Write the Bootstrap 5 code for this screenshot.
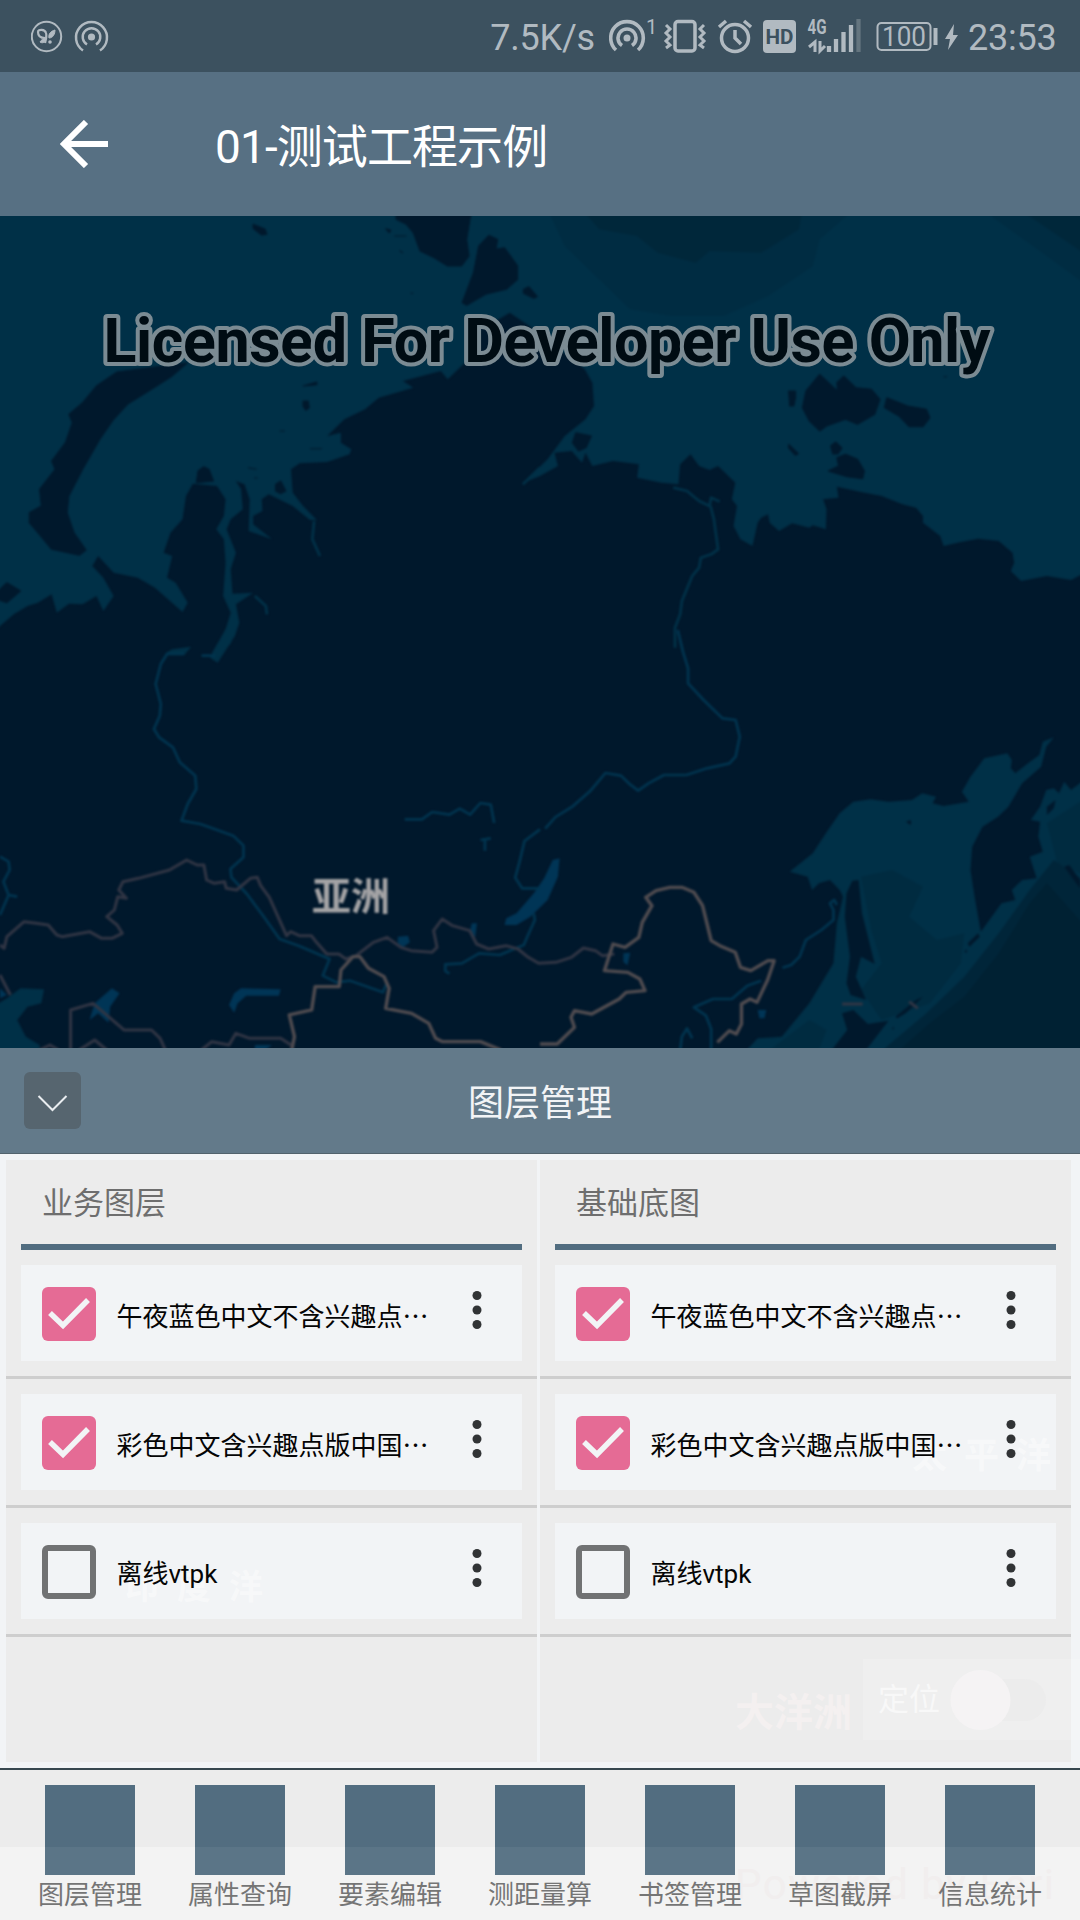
<!DOCTYPE html>
<html lang="zh-CN">
<head>
<meta charset="utf-8">
<meta name="viewport" content="width=device-width, initial-scale=1">
<title>01-测试工程示例</title>
<link href="https://cdn.jsdelivr.net/npm/bootstrap@5.3.0/dist/css/bootstrap.min.css" rel="stylesheet">
<style>
  body { width: 1080px; height: 1920px; overflow: hidden; font-family: Roboto, "Noto Sans CJK SC", sans-serif; line-height: 1; background: #ececec; }
  svg { display: block; flex: none; }
  .status-bar { height: 72px; background: #3c515f; color: #b1bac1; font-size: 36px; padding: 0 24px 0 31px; }
  .status-bar svg text { fill: #b1bac1; }
  .status-text { padding-top: 3px; letter-spacing: -.2px; }
  .clock { width: 88px; }
  .app-bar { height: 144px; background: #577083; padding-left: 60px; }
  .app-title { font-size: 46px; letter-spacing: -.9px; margin: 7px 0 0 107px; }
  .map-view { height: 832px; background: #00182c; overflow: hidden; }
  .terrain { filter: blur(.8px); }
  .panel-head { height: 106px; background: #637a8a; border-bottom: 1px solid #52636d; }
  .panel-name { font-size: 36px; color: #f2f4f6; padding-top: 7px; }
  .fold-btn { left: 24px; top: 24px; width: 57px; height: 57px; border-radius: 6px; background: #56656f; border: 0; padding: 0; }
  .panel-body { height: 614px; background: #f2f4f6; padding: 6px 9px 6px 6px; gap: 3px; }
  .layer-col { flex: 1 1 0; min-width: 0; background: #ececec; }
  .layer-head { height: 90px; margin: 0 15px; padding: 3px 21px 0; border-bottom: 6px solid #526d80; color: #6e6e6e; font-size: 31px; }
  .layer-item { padding: 15px; border-bottom: 3px solid #cecece; }
  .layer-box { height: 96px; background: #f2f4f6; padding: 2px 37px 0 21px; }
  .layer-label { width: 314px; margin-left: 20.5px; font-size: 26px; line-height: 40px; color: #050505; padding-top: 4px; white-space: nowrap; z-index: 2; }
  .dots { font-family: "Noto Sans CJK SC", sans-serif; }
  .more { z-index: 2; margin-top: -8px; }
  .ghost { z-index: 1; color: rgba(255,255,255,.42); font-weight: 700; white-space: nowrap; pointer-events: none; }
  .ghost-pacific { left: 912px; top: 285px; font-size: 35px; letter-spacing: 17px; }
  .ghost-indian { left: 125px; top: 416px; font-size: 34px; letter-spacing: 18px; }
  .ghost-oceania { left: 735px; top: 540px; font-size: 39px; color: #f4f0f0; }
  .locate { left: 863px; top: 505px; width: 217px; height: 81px; background: rgba(255,255,255,.2); font-weight: 400; font-size: 31px; padding-left: 15px; color: #f8f8f8; }
  .tool-bar { height: 152px; border-top: 2px solid #37474f; padding: 15px 15px 0; background: linear-gradient(#ececec 77px, #f3f3f3 77px); }
  .tool { width: 150px; color: #757575; font-size: 26px; }
  .tool-icon { width: 90px; height: 90px; background: linear-gradient(#526d80 62px, #5b7587 62px); }
  .tool-name { margin-top: 7px; z-index: 2; }
  .powered { left: 735px; top: 94px; font-size: 42px; font-weight: 400; color: #f1eeee; letter-spacing: 1.5px; z-index: 0; }
</style>
</head>
<body class="d-flex flex-column">

<header class="status-bar d-flex align-items-center flex-shrink-0">
  <svg width="80" height="72" viewBox="31 0 80 72" fill="none" stroke="#b1bac1" stroke-width="2">
    <circle cx="46.5" cy="36.5" r="14.7"/>
    <path d="M45 38c-6 0-7-3-7-6s7-3 8 1c1 3 0 6-1 10" stroke-width="2.2"/>
    <path d="M55 30c-4 1-7 4-6 8 4 0 6-4 6-8zM46 37c-3 2-5 3-6 5 3 2 6 0 6-5z" fill="#b1bac1" stroke-width="1"/>
    <circle cx="50" cy="42" r="1.8" fill="#b1bac1" stroke="none"/>
    <circle cx="91.5" cy="37" r="3.6" fill="#b1bac1" stroke="none"/>
    <path d="M83 50.500A15.500 15.500 0 1 1 100 50.500M87 44.500a8.800 8.800 0 1 1 9 0" stroke-width="2.500"/>
  </svg>
  <span class="status-text ms-auto">7.5K/s</span>
  <svg width="360" height="72" viewBox="609 0 360 72" fill="none" stroke="#b1bac1" style="margin-left:14px">
    <circle cx="627" cy="38" r="3.500" fill="#b1bac1" stroke="none"/>
    <path d="M616 50A16.300 16.300 0 1 1 638 50M622 45.500a9 9 0 1 1 10 0" stroke-width="3.600"/>
    <text x="646" y="34" font-size="20" stroke="none">1</text>
    <rect x="675" y="21.500" width="20" height="29.500" rx="3" stroke-width="3.500"/>
    <path d="M666 25l4 4-4 4 4 4-4 4 4 4-4 3M704 25l-4 4 4 4-4 4 4 4-4 4 4 3" stroke-width="3"/>
    <circle cx="735" cy="38" r="13.500" stroke-width="3.500"/>
    <path d="M735 30v8l6 6M719 27l7-6M751 27l-7-6" stroke-width="3.500"/>
    <rect x="763" y="20" width="33" height="33" rx="4" fill="#b1bac1" stroke="none"/>
    <text x="765.500" y="44" font-size="20" font-weight="700" stroke="none" textLength="28" lengthAdjust="spacingAndGlyphs" style="fill:#3c515f">HD</text>
    <text x="807.500" y="33.500" font-size="20" font-weight="700" stroke="none" textLength="19" lengthAdjust="spacingAndGlyphs">4G</text>
    <path d="M815 52V42l-6 5M820 41v10l5-5" stroke-width="3"/>
    <path d="M829 46v6M836 39v13M843.500 32v20M851 25v27" stroke-width="4.300"/>
    <path d="M858.500 19v33" stroke-width="4.300" stroke="#64757f"/>
    <rect x="877.500" y="23" width="53" height="27" rx="4" stroke-width="2"/>
    <text x="882" y="46" font-size="27" stroke="none" textLength="44" lengthAdjust="spacingAndGlyphs">100</text>
    <path d="M935.500 28v17" stroke-width="4"/>
    <path d="M954 24l-9 15h5l-2 11 10-15h-5z" fill="#b1bac1" stroke="none"/>
  </svg>
  <span class="status-text clock" style="margin-left:-1px">23:53</span>
</header>

<nav class="app-bar d-flex align-items-center flex-shrink-0 text-white">
  <svg width="48" height="48" viewBox="0 0 48 48" fill="none" stroke="#fff" stroke-width="6"><path d="M26 2L4 24l22 22M3 24h45"/></svg>
  <h1 class="app-title fw-normal">01-测试工程示例</h1>
</nav>

<section class="map-view flex-shrink-0">
  <svg width="1080" height="832" viewBox="0 0 1080 832">
    <g class="terrain">
    <!-- northern seas and islands -->
    <g transform="scale(.34439 .33333)">
      <path fill="#003047" d="M-20 1250L0 1230 40 1195 80 1170 110 1160 150 1135 165 1190 200 1163 240 1165 280 1140 300 1185 330 1140 300 1085 268 1050 285 1020 330 1070 400 1085 450 1115 530 1188 545 1160 510 1100 485 1085 500 1020 475 1010 495 950 530 910 540 840 560 803 630 810 655 850 650 900 628 940 650 970 655 1040 648 1140 670 1190 655 1240 610 1325 632 1340 682 1260 695 1220 685 1165 735 1130 675 1133 670 1060 685 1010 658 940 670 910 705 880 700 820 685 795 710 805 725 850 722 945 790 970 735 925 735 900 762 885 760 850 780 835 850 870 900 912 920 912 880 870 850 830 845 760 870 742 950 738 1015 715 1020 700 990 680 990 650 950 660 1000 610 1060 580 1100 545 1200 515 1170 495 1280 465 1300 490 1350 440 1400 330 1440 315 1480 290 1530 325 1698 460 1720 500 1725 570 1700 610 1640 660 1590 730 1520 800 1568 780 1620 750 1610 710 1660 705 1690 740 1700 710 1720 750 1780 735 1855 745 1850 785 1920 800 1970 805 1975 745 2005 715 2030 750 2060 762 2085 750 2135 800 2125 850 2140 870 2130 930 2150 970 2185 990 2200 920 2210 905 2230 895 2235 920 2262 945 2300 922 2350 935 2360 928 2398 940 2400 880 2390 850 2435 845 2430 812 2500 828 2560 840 2620 865 2660 875 2680 900 2680 920 2730 960 2740 990 2790 978 2840 968 2900 975 2940 1010 2945 1040 2935 1065 2965 1095 3040 1080 3110 1092 3160 1065V-20H-20Z"/>
      <path fill="#002c42" d="M1590 -20L1640 90 1730 180 1830 280 1950 300 2100 300 2230 240 2360 150 2380 70 2480 -20ZM2850 -20L3000 90 3160 210V-20Z"/>
      <path fill="#00273a" d="M1690 -20L1740 40 1850 60 1910 110 2020 140 2060 105 2210 110 2320 40 2330 -20ZM2960 -20L3160 120V-20Z"/>
      <g fill="#00182c" stroke="#00182c" stroke-width="3" stroke-linejoin="round">
        <path d="M1150 -10L1150 10 1180 25 1200 50 1220 105 1260 125 1300 150 1340 150 1362 120 1355 70 1368 -10ZM1390 90L1420 58 1445 70 1440 100 1465 95 1503 150 1503 190 1470 220 1410 235 1355 268 1342 260 1375 170Z"/>
        <path d="M735 25l35 15 5 15-15 2-25-20zM1120 38l15 5-5 7zM1145 60h35M1160 103l10 8M1520 220l15-8 25 30-10 5-30-15zM880 555h15l3 20-10 8-8-12zM880 510l40-12v8zM812 645h15M900 698h35M720 755l25 5M738 786h10M1192 232h8"/>
        <path d="M545 440L340 468 280 510 240 560 200 595 210 620 190 680 150 735 160 760 115 820 120 870 85 890 85 920 110 950 150 1000 230 1018 250 1002 215 950 195 890 200 840 240 760 290 670 330 610 370 565 440 520 500 480Z"/>
        <path d="M570 800L575 765 592 752 607 760 620 795ZM800 825l0-20 15-10 15 30-15 8zM-10 1130L20 1100 60 1125 20 1160 -10 1150Z"/>
        <path d="M2290 525h20v20l-5 25h-12zM2330 575L2340 525 2380 475 2432 525 2430 500 2450 480 2485 515 2530 520 2555 550 2540 595 2490 625 2455 610 2400 630 2380 645 2350 615ZM2568 575L2575 545 2635 570 2690 580 2700 605 2680 632 2640 632 2610 600ZM2290 685l28 28-8 5-20-22zM2412 690l15-12 18 18-12 18h-15zM2405 765L2435 750 2430 725 2455 715 2490 730 2510 765 2505 788 2460 782ZM1662 680l10-30 45 10-15 35-22 10zM2740 482h10"/>
      </g>
      <g fill="none" stroke="#003148" stroke-width="8" stroke-linejoin="round">
        <path d="M912 915l-5 55 22 50M740 1140l32 30 3 25M1568 755l-50 50"/>
        <path d="M1955 815l40 10 35 30 30 15 5-25 25 12M2063 870l10 40 12 90-20 15-30 10-5 30-20 25-30 75-5 40-15 40v60"/>
      </g>
    </g>
    <!-- rivers, borders and the eastern coast -->
    <g transform="translate(0 414) scale(.34439 .33333)">
      <path fill="#003047" d="M2293 725L2360 670 2398 610 2438 550 2478 515 2528 508 2580 515 2648 510 2678 490 2718 500 2708 520 2740 528 2813 515 2793 485 2818 440 2858 385 2925 370 2938 390 2935 415 2948 430 2985 400 3018 375 3028 335 3060 322 3038 350 3023 410 2968 460 2928 530 2898 560 2853 590 2823 650 2818 720 2830 800 2848 905 2908 820 2948 810 2938 780 2968 750 3010 745 2990 680 3028 665 3015 620 3020 575 2993 570 3020 530 3038 480 3060 475 3075 490 3090 455 3110 480 3160 440V1280H2150L2200 1225 2270 1220 2350 1120 2420 1000 2430 880 2448 800 2438 780 2410 750 2378 760 2358 780 2345 740Z"/>
      <path fill="#002b40" d="M2500 740L2590 720 2680 770 2640 860 2720 930 2800 910 2790 1000 2700 1120 2560 1170 2500 1080 2560 1000 2530 900ZM2210 1280L2350 1170 2400 1200 2370 1280ZM3040 580L3160 500V740L3070 700Z"/>
      <path fill="#002539" d="M3160 760L3060 690 2990 780 2900 910 2800 1040 2690 1150 2540 1280H3160Z"/>
      <path fill="#002133" d="M3160 900L3040 760 2990 820 2900 970 2800 1100 2700 1180 2590 1280H3160Z"/>
      <g fill="#00182c">
        <path d="M2475 752L2493 750 2503 850 2540 1002 2500 980 2485 1040 2515 1110 2470 1095 2458 1060 2468 980 2453 860 2458 790ZM2445 1150L2478 1140 2520 1182 2580 1172 2500 1280H2400L2460 1200Z"/>
        <path d="M2810 940l30-30 5 10-30 30zM2600 1160l60-50 20-10-50 50-25 15zM2800 965l7-8v12zM3040 530l25-20-5 25-20 20zM3090 710l15-5 31 45v25zM2630 575l15-5v15zM2590 1195l5-5v10z"/>
      </g>
      <g fill="#003556">
        <path d="M1605 690L1625 685 1620 740 1590 810 1540 860 1500 885 1465 885 1470 865 1500 850 1550 790 1580 745ZM1155 920l30-3 5 20-20 15-15-12zM1370 880h15l-5 40-10 5-7-15zM1810 970l20-2-8 38-12-10zM665 1125L680 1090 700 1075 815 1078 810 1097 715 1097 690 1120 680 1148ZM260 1170L275 1120 325 1075 347 1090 320 1130 315 1178 285 1150ZM740 1245h50l-20 15h-30zM0 1075l20 20-20 10zM2200 1140h25l-5 25h-15z"/>
      </g>
      <path fill="#003047" d="M-20 1130L20 1105 60 1075 128 1078 120 1120 80 1130 50 1170 75 1220 115 1245V1280H-20ZM660 -10h25l-15 50-40 45-15-15zM480 70l20-12 55-8-20 25z"/>
      <g fill="none" stroke="#00344f" stroke-width="8" stroke-linejoin="round">
        <path d="M535 72l-50 0-18 30-15 60 15 60-3 35-17 40 15 25 40 30 20 45 45 40 3 40-25 45-18 50 55 10 95 35 30 30v35l-38 35 3 25 45 50 50 70 45 65 55 20 90 40-20 50 40 20 40-5 95 35 10-25"/>
        <path d="M585 77h40M1175 568h50l30-22 50 8 30-18 30 18 30-35 30 5 10 55M1395 630l30-5M1408 630v32M0 680l25 15 3 25-18 35 15 40 25 5M25 795L0 855M1568 598l-45 35-15 65-12 45 20 32h52M1550 850l3 20-22 50-10 25-70 30-60-5-50 30-48 3 0 20 12 8"/>
        <path d="M1968 0l15 65 15 50v45l45 50 55 55 38 5 12 50-12 60-18 20-65 15-60 20h-65l-45 25-30 22-25-20-25-25-45-8-45 55-50 45-50 32-30 35"/>
        <path d="M2430 825l-8-15-12 10 10 20v30l-35 30-45 30-18 50-25 25-25 8M2210 1052l-40 15-45 40h-55l-55 25 35 25 15 40v85M1975 1260l5-40 15-25 15 30"/>
      </g>
      <g fill="none" stroke="#303544" stroke-width="9" stroke-linejoin="round">
        <path d="M0 945l12 10 8-35 50-45 35 5 35 5 25 30 15 5 80-15 35 20h30l30-15-15-25-30-25 22-20 10-40 25 5-22-25 12-25 45-10 90-25 50-30 30 15h20l8 45 22 10 30-5 5 20 30 5 40-35 20-3 10 25 25 35 50 115 12-12 25 12h35l15 20 30 35h35l20 15 30-10 50-40 40-15 40 30 30 10 60 5 15-15-10-50 25-35 30 20 50 15 20 40 35 15 50-10 35 10 30 25 30 18 50-3 45-15 35-28 35 8 20 15 35-5M0 1035l30 60M205 1260v-120l65-20 90 80h80l25 25 15 35M115 1260l30-15 25 15M230 1260l45-30 35 30M585 1260l30-25 50 10 20-35 40 15h90l30 20M2445 1122h60M2640 1115l25 20"/>
      </g>
      <path fill="none" stroke="#504c50" stroke-width="10" stroke-linejoin="round" d="M845 1270l10-50-15-65 65-15 10-70h70l5-50 35-40h20l25 35 45 25 15 35-10 60 75 15 50 30 20 45 20 10h110l60 25M1568 1242h50l50-50-10-30 10-20 50 10 80-45 20-20 55-5-15-35-35-20-68-5 25-80 35 10 40-30 10-45 28-50-18-25 30-20 40-10h35l35 15 25 40 25 105 25 15 45 20 15 45 30 10 50-30 18 0-20 60-30 65-20-10-25 15v60l-15 30-20-10-35 35"/>
    </g>
    <text x="312" y="694" font-family="Noto Sans CJK SC" font-size="39" font-weight="700" fill="#a3a3a5">亚洲</text>
    </g>
    <text x="103.500" y="146" font-size="61" font-weight="700" fill="#000c13" stroke="#7b8b93" stroke-width="8" stroke-linejoin="round" paint-order="stroke" textLength="887">Licensed For Developer Use Only</text>
  </svg>
</section>

<section class="panel-head position-relative d-flex align-items-center justify-content-center flex-shrink-0">
  <button class="fold-btn position-absolute" type="button" aria-label="收起">
    <svg width="57" height="57" fill="none" stroke="#e9edf0" stroke-width="2"><path d="M14.500 24L28.500 38 42.500 24"/></svg>
  </button>
  <div class="panel-name">图层管理</div>
</section>

<main class="panel-body position-relative d-flex flex-shrink-0">
  <div class="layer-col">
    <div class="layer-head d-flex align-items-center">业务图层</div>
    <div class="layer-item">
      <div class="layer-box d-flex align-items-center">
        <svg width="54" height="54"><rect width="54" height="54" rx="6" fill="#e56b95"/><path d="M8 26L21 38.500 46 13" fill="none" stroke="#f2f4f6" stroke-width="5.500"/></svg>
        <div class="layer-label position-relative">午夜蓝色中文不含兴趣点<span class="dots">…</span></div>
        <svg class="more position-relative ms-auto" width="16" height="44" fill="#313335"><circle cx="8" cy="7.500" r="4.500"/><circle cx="8" cy="22" r="4.500"/><circle cx="8" cy="36.500" r="4.500"/></svg>
      </div>
    </div>
    <div class="layer-item">
      <div class="layer-box d-flex align-items-center">
        <svg width="54" height="54"><rect width="54" height="54" rx="6" fill="#e56b95"/><path d="M8 26L21 38.500 46 13" fill="none" stroke="#f2f4f6" stroke-width="5.500"/></svg>
        <div class="layer-label position-relative">彩色中文含兴趣点版中国<span class="dots">…</span></div>
        <svg class="more position-relative ms-auto" width="16" height="44" fill="#313335"><circle cx="8" cy="7.500" r="4.500"/><circle cx="8" cy="22" r="4.500"/><circle cx="8" cy="36.500" r="4.500"/></svg>
      </div>
    </div>
    <div class="layer-item">
      <div class="layer-box d-flex align-items-center">
        <svg width="54" height="54"><rect x="3" y="3" width="48" height="48" rx="3" fill="none" stroke="#717273" stroke-width="6"/></svg>
        <div class="layer-label position-relative">离线vtpk</div>
        <svg class="more position-relative ms-auto" width="16" height="44" fill="#313335"><circle cx="8" cy="7.500" r="4.500"/><circle cx="8" cy="22" r="4.500"/><circle cx="8" cy="36.500" r="4.500"/></svg>
      </div>
    </div>
  </div>
  <div class="layer-col">
    <div class="layer-head d-flex align-items-center">基础底图</div>
    <div class="layer-item">
      <div class="layer-box d-flex align-items-center">
        <svg width="54" height="54"><rect width="54" height="54" rx="6" fill="#e56b95"/><path d="M8 26L21 38.500 46 13" fill="none" stroke="#f2f4f6" stroke-width="5.500"/></svg>
        <div class="layer-label position-relative">午夜蓝色中文不含兴趣点<span class="dots">…</span></div>
        <svg class="more position-relative ms-auto" width="16" height="44" fill="#313335"><circle cx="8" cy="7.500" r="4.500"/><circle cx="8" cy="22" r="4.500"/><circle cx="8" cy="36.500" r="4.500"/></svg>
      </div>
    </div>
    <div class="layer-item">
      <div class="layer-box d-flex align-items-center">
        <svg width="54" height="54"><rect width="54" height="54" rx="6" fill="#e56b95"/><path d="M8 26L21 38.500 46 13" fill="none" stroke="#f2f4f6" stroke-width="5.500"/></svg>
        <div class="layer-label position-relative">彩色中文含兴趣点版中国<span class="dots">…</span></div>
        <svg class="more position-relative ms-auto" width="16" height="44" fill="#313335"><circle cx="8" cy="7.500" r="4.500"/><circle cx="8" cy="22" r="4.500"/><circle cx="8" cy="36.500" r="4.500"/></svg>
      </div>
    </div>
    <div class="layer-item">
      <div class="layer-box d-flex align-items-center">
        <svg width="54" height="54"><rect x="3" y="3" width="48" height="48" rx="3" fill="none" stroke="#717273" stroke-width="6"/></svg>
        <div class="layer-label position-relative">离线vtpk</div>
        <svg class="more position-relative ms-auto" width="16" height="44" fill="#313335"><circle cx="8" cy="7.500" r="4.500"/><circle cx="8" cy="22" r="4.500"/><circle cx="8" cy="36.500" r="4.500"/></svg>
      </div>
    </div>
  </div>
  <!-- map labels and the locate switch showing through the panel -->
  <div class="ghost ghost-pacific position-absolute">太平洋</div>
  <div class="ghost ghost-indian position-absolute">印度洋</div>
  <div class="ghost ghost-oceania position-absolute">大洋洲</div>
  <div class="ghost locate position-absolute d-flex align-items-center">定位
    <svg width="110" height="64" style="margin-left:7px"><rect x="20" y="11" width="79" height="42" rx="21" fill="#ececec"/><circle cx="33.500" cy="32" r="30" fill="#f5f3f4"/></svg>
  </div>
</main>

<footer class="tool-bar position-relative d-flex flex-shrink-0">
  <div class="ghost powered position-absolute">Powered by Esri</div>
  <div class="tool d-flex flex-column align-items-center"><div class="tool-icon position-relative z-2"></div><div class="tool-name position-relative">图层管理</div></div>
  <div class="tool d-flex flex-column align-items-center"><div class="tool-icon position-relative z-2"></div><div class="tool-name position-relative">属性查询</div></div>
  <div class="tool d-flex flex-column align-items-center"><div class="tool-icon position-relative z-2"></div><div class="tool-name position-relative">要素编辑</div></div>
  <div class="tool d-flex flex-column align-items-center"><div class="tool-icon position-relative z-2"></div><div class="tool-name position-relative">测距量算</div></div>
  <div class="tool d-flex flex-column align-items-center"><div class="tool-icon position-relative z-2"></div><div class="tool-name position-relative">书签管理</div></div>
  <div class="tool d-flex flex-column align-items-center"><div class="tool-icon position-relative z-2"></div><div class="tool-name position-relative">草图截屏</div></div>
  <div class="tool d-flex flex-column align-items-center"><div class="tool-icon position-relative z-2"></div><div class="tool-name position-relative">信息统计</div></div>
</footer>

<script src="https://cdn.jsdelivr.net/npm/bootstrap@5.3.0/dist/js/bootstrap.bundle.min.js"></script>
</body>
</html>
